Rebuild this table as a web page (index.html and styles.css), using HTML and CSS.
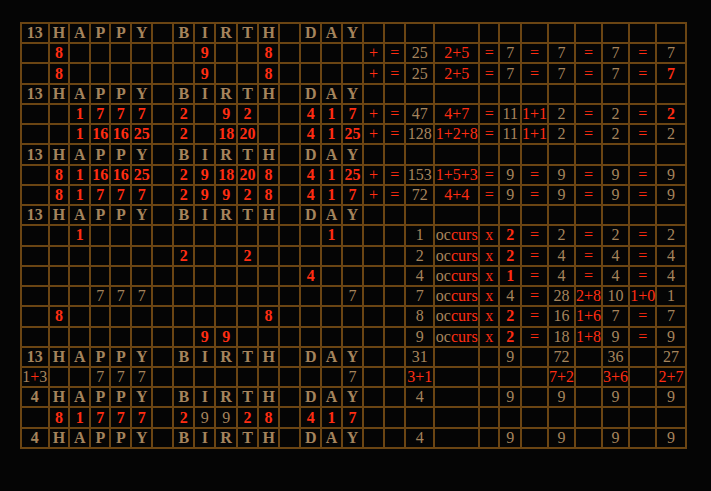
FILE: index.html
```html
<!DOCTYPE html>
<html>
<head>
<meta charset="utf-8">
<link rel="stylesheet" href="styles.css">
</head>
<body>
<div class="grid">
<!-- row 1 -->
<span class="L">13</span><span class="L">H</span><span class="L">A</span><span class="L">P</span><span class="L">P</span><span class="L">Y</span><span></span><span class="L">B</span><span class="L">I</span><span class="L">R</span><span class="L">T</span><span class="L">H</span><span></span><span class="L">D</span><span class="L">A</span><span class="L">Y</span>
<span></span><span></span><span></span><span></span><span></span><span></span><span></span><span></span><span></span><span></span><span></span><span></span>
<!-- row 2 -->
<span></span><span class="R">8</span><span></span><span></span><span></span><span></span><span></span><span></span><span class="R">9</span><span></span><span></span><span class="R">8</span><span></span><span></span><span></span><span></span>
<span class="r">+</span><span class="r">=</span><span class="t">25</span><span class="r">2+5</span><span class="r">=</span><span class="t">7</span><span class="r">=</span><span class="t">7</span><span class="r">=</span><span class="t">7</span><span class="r">=</span><span class="t">7</span>
<!-- row 3 -->
<span></span><span class="R">8</span><span></span><span></span><span></span><span></span><span></span><span></span><span class="R">9</span><span></span><span></span><span class="R">8</span><span></span><span></span><span></span><span></span>
<span class="r">+</span><span class="r">=</span><span class="t">25</span><span class="r">2+5</span><span class="r">=</span><span class="t">7</span><span class="r">=</span><span class="t">7</span><span class="r">=</span><span class="t">7</span><span class="r">=</span><span class="R">7</span>
<!-- row 4 -->
<span class="L">13</span><span class="L">H</span><span class="L">A</span><span class="L">P</span><span class="L">P</span><span class="L">Y</span><span></span><span class="L">B</span><span class="L">I</span><span class="L">R</span><span class="L">T</span><span class="L">H</span><span></span><span class="L">D</span><span class="L">A</span><span class="L">Y</span>
<span></span><span></span><span></span><span></span><span></span><span></span><span></span><span></span><span></span><span></span><span></span><span></span>
<!-- row 5 -->
<span></span><span></span><span class="R">1</span><span class="R">7</span><span class="R">7</span><span class="R">7</span><span></span><span class="R">2</span><span></span><span class="R">9</span><span class="R">2</span><span></span><span></span><span class="R">4</span><span class="R">1</span><span class="R">7</span>
<span class="r">+</span><span class="r">=</span><span class="t">47</span><span class="r">4+7</span><span class="r">=</span><span class="t">11</span><span class="r">1+1</span><span class="t">2</span><span class="r">=</span><span class="t">2</span><span class="r">=</span><span class="R">2</span>
<!-- row 6 -->
<span></span><span></span><span class="R">1</span><span class="R">16</span><span class="R">16</span><span class="R">25</span><span></span><span class="R">2</span><span></span><span class="R">18</span><span class="R">20</span><span></span><span></span><span class="R">4</span><span class="R">1</span><span class="R">25</span>
<span class="r">+</span><span class="r">=</span><span class="t">128</span><span class="r">1+2+8</span><span class="r">=</span><span class="t">11</span><span class="r">1+1</span><span class="t">2</span><span class="r">=</span><span class="t">2</span><span class="r">=</span><span class="t">2</span>
<!-- row 7 -->
<span class="L">13</span><span class="L">H</span><span class="L">A</span><span class="L">P</span><span class="L">P</span><span class="L">Y</span><span></span><span class="L">B</span><span class="L">I</span><span class="L">R</span><span class="L">T</span><span class="L">H</span><span></span><span class="L">D</span><span class="L">A</span><span class="L">Y</span>
<span></span><span></span><span></span><span></span><span></span><span></span><span></span><span></span><span></span><span></span><span></span><span></span>
<!-- row 8 -->
<span></span><span class="R">8</span><span class="R">1</span><span class="R">16</span><span class="R">16</span><span class="R">25</span><span></span><span class="R">2</span><span class="R">9</span><span class="R">18</span><span class="R">20</span><span class="R">8</span><span></span><span class="R">4</span><span class="R">1</span><span class="R">25</span>
<span class="r">+</span><span class="r">=</span><span class="t">153</span><span class="r">1+5+3</span><span class="r">=</span><span class="t">9</span><span class="r">=</span><span class="t">9</span><span class="r">=</span><span class="t">9</span><span class="r">=</span><span class="t">9</span>
<!-- row 9 -->
<span></span><span class="R">8</span><span class="R">1</span><span class="R">7</span><span class="R">7</span><span class="R">7</span><span></span><span class="R">2</span><span class="R">9</span><span class="R">9</span><span class="R">2</span><span class="R">8</span><span></span><span class="R">4</span><span class="R">1</span><span class="R">7</span>
<span class="r">+</span><span class="r">=</span><span class="t">72</span><span class="r">4+4</span><span class="r">=</span><span class="t">9</span><span class="r">=</span><span class="t">9</span><span class="r">=</span><span class="t">9</span><span class="r">=</span><span class="t">9</span>
<!-- row 10 -->
<span class="L">13</span><span class="L">H</span><span class="L">A</span><span class="L">P</span><span class="L">P</span><span class="L">Y</span><span></span><span class="L">B</span><span class="L">I</span><span class="L">R</span><span class="L">T</span><span class="L">H</span><span></span><span class="L">D</span><span class="L">A</span><span class="L">Y</span>
<span></span><span></span><span></span><span></span><span></span><span></span><span></span><span></span><span></span><span></span><span></span><span></span>
<!-- row 11 -->
<span></span><span></span><span class="R">1</span><span></span><span></span><span></span><span></span><span></span><span></span><span></span><span></span><span></span><span></span><span></span><span class="R">1</span><span></span><span></span><span></span>
<span class="t">1</span><span class="occ">oc<b>curs</b></span><span class="r">x</span><span class="R">2</span><span class="r">=</span><span class="t">2</span><span class="r">=</span><span class="t">2</span><span class="r">=</span><span class="t">2</span>
<!-- row 12 -->
<span></span><span></span><span></span><span></span><span></span><span></span><span></span><span class="R">2</span><span></span><span></span><span class="R">2</span><span></span><span></span><span></span><span></span><span></span><span></span><span></span>
<span class="t">2</span><span class="occ">oc<b>curs</b></span><span class="r">x</span><span class="R">2</span><span class="r">=</span><span class="t">4</span><span class="r">=</span><span class="t">4</span><span class="r">=</span><span class="t">4</span>
<!-- row 13 -->
<span></span><span></span><span></span><span></span><span></span><span></span><span></span><span></span><span></span><span></span><span></span><span></span><span></span><span class="R">4</span><span></span><span></span><span></span><span></span>
<span class="t">4</span><span class="occ">oc<b>curs</b></span><span class="r">x</span><span class="R">1</span><span class="r">=</span><span class="t">4</span><span class="r">=</span><span class="t">4</span><span class="r">=</span><span class="t">4</span>
<!-- row 14 -->
<span></span><span></span><span></span><span class="t">7</span><span class="t">7</span><span class="t">7</span><span></span><span></span><span></span><span></span><span></span><span></span><span></span><span></span><span></span><span class="t">7</span><span></span><span></span>
<span class="t">7</span><span class="occ">oc<b>curs</b></span><span class="r">x</span><span class="t">4</span><span class="r">=</span><span class="t">28</span><span class="r">2+8</span><span class="t">10</span><span class="r">1+0</span><span class="t">1</span>
<!-- row 15 -->
<span></span><span class="R">8</span><span></span><span></span><span></span><span></span><span></span><span></span><span></span><span></span><span></span><span class="R">8</span><span></span><span></span><span></span><span></span><span></span><span></span>
<span class="t">8</span><span class="occ">oc<b>curs</b></span><span class="r">x</span><span class="R">2</span><span class="r">=</span><span class="t">16</span><span class="r">1+6</span><span class="t">7</span><span class="r">=</span><span class="t">7</span>
<!-- row 16 -->
<span></span><span></span><span></span><span></span><span></span><span></span><span></span><span></span><span class="R">9</span><span class="R">9</span><span></span><span></span><span></span><span></span><span></span><span></span><span></span><span></span>
<span class="t">9</span><span class="occ">oc<b>curs</b></span><span class="r">x</span><span class="R">2</span><span class="r">=</span><span class="t">18</span><span class="r">1+8</span><span class="t">9</span><span class="r">=</span><span class="t">9</span>
<!-- row 17 -->
<span class="L">13</span><span class="L">H</span><span class="L">A</span><span class="L">P</span><span class="L">P</span><span class="L">Y</span><span></span><span class="L">B</span><span class="L">I</span><span class="L">R</span><span class="L">T</span><span class="L">H</span><span></span><span class="L">D</span><span class="L">A</span><span class="L">Y</span>
<span></span><span></span><span class="t">31</span><span></span><span></span><span class="t">9</span><span></span><span class="t">72</span><span></span><span class="t">36</span><span></span><span class="t">27</span>
<!-- row 18 -->
<span class="t">1<b class="plus">+</b>3</span><span></span><span></span><span class="t">7</span><span class="t">7</span><span class="t">7</span><span></span><span></span><span></span><span></span><span></span><span></span><span></span><span></span><span></span><span class="t">7</span>
<span></span><span></span><span class="r">3+1</span><span></span><span></span><span></span><span></span><span class="r">7+2</span><span></span><span class="r">3+6</span><span></span><span class="r">2+7</span>
<!-- row 19 -->
<span class="L">4</span><span class="L">H</span><span class="L">A</span><span class="L">P</span><span class="L">P</span><span class="L">Y</span><span></span><span class="L">B</span><span class="L">I</span><span class="L">R</span><span class="L">T</span><span class="L">H</span><span></span><span class="L">D</span><span class="L">A</span><span class="L">Y</span>
<span></span><span></span><span class="t">4</span><span></span><span></span><span class="t">9</span><span></span><span class="t">9</span><span></span><span class="t">9</span><span></span><span class="t">9</span>
<!-- row 20 -->
<span></span><span class="R">8</span><span class="R">1</span><span class="R">7</span><span class="R">7</span><span class="R">7</span><span></span><span class="R">2</span><span class="t">9</span><span class="t">9</span><span class="R">2</span><span class="R">8</span><span></span><span class="R">4</span><span class="R">1</span><span class="R">7</span>
<span></span><span></span><span></span><span></span><span></span><span></span><span></span><span></span><span></span><span></span><span></span><span></span>
<!-- row 21 -->
<span class="L">4</span><span class="L">H</span><span class="L">A</span><span class="L">P</span><span class="L">P</span><span class="L">Y</span><span></span><span class="L">B</span><span class="L">I</span><span class="L">R</span><span class="L">T</span><span class="L">H</span><span></span><span class="L">D</span><span class="L">A</span><span class="L">Y</span>
<span></span><span></span><span class="t">4</span><span></span><span></span><span class="t">9</span><span></span><span class="t">9</span><span></span><span class="t">9</span><span></span><span class="t">9</span>
</div>
</body>
</html>
```

FILE: styles.css
```css
html, body {
  margin: 0;
  background: #050505;
}
body {
  padding: 22px 0 0 20px;
  font-family: "Liberation Serif", "Times New Roman", serif;
  font-size: 16px;
}
.grid {
  display: inline-grid;
  grid-template-columns:
    25.6px 18.7px 19px 18px 19px 19px 19px 19px 19px 19.7px
    19px 19.3px 19px 19px 18.7px 19px 19.3px 19px 27px 43px
    18px 20px 24.7px 25.3px 24.7px 25.3px 25px 27.7px;
  grid-template-rows: repeat(21, 18.24px);
  gap: 2px;
  padding: 2px;
  background: #6b4513;
}
.grid > span {
  background: #050505;
  display: flex;
  align-items: center;
  justify-content: center;
  white-space: nowrap;
  overflow: visible;
  line-height: 1;
}
.L {
  color: #a5845c;
  font-weight: bold;
}
.R {
  color: #ff2d12;
  font-weight: bold;
}
.t {
  color: #a5845c;
}
.r {
  color: #ff2d12;
}
.occ {
  color: #a5845c;
}
.occ b, .plus {
  color: #ff2d12;
  font-weight: normal;
}
```
